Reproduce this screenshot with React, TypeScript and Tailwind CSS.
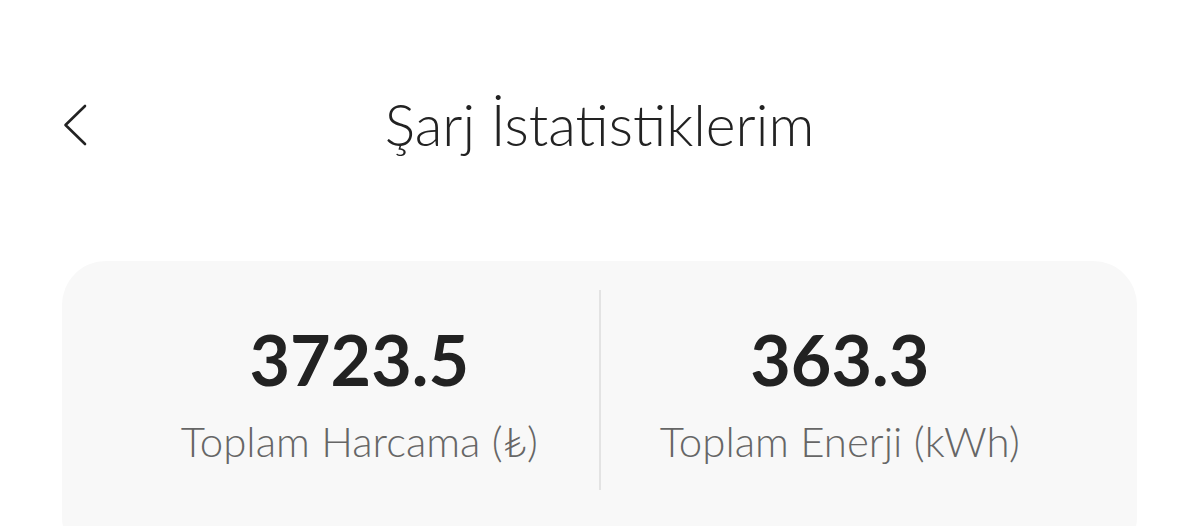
import React from "react";

type Stat = {
  value: string;
  label: string;
};

const stats: Stat[] = [
  { value: "3723.5", label: "Toplam Harcama (₺)" },
  { value: "363.3", label: "Toplam Enerji (kWh)" },
];

function BackChevron() {
  return (
    <svg width="26" height="44" viewBox="0 0 26 44" fill="none" aria-hidden="true">
      <path
        d="M22 3 L2.5 22 L22 41"
        stroke="#222222"
        strokeWidth="2.6"
        strokeLinecap="round"
        strokeLinejoin="round"
      />
    </svg>
  );
}

function StatColumn({ stat }: { stat: Stat }) {
  return (
    <div className="flex flex-1 flex-col items-center pt-[34px]">
      <div className="text-[70px] font-bold leading-none text-[#222222]">{stat.value}</div>
      <div className="mt-[26px] text-[42px] font-light leading-none text-[#666666]">
        {stat.label}
      </div>
    </div>
  );
}

export default function App() {
  return (
    <div className="h-[526px] overflow-hidden bg-white font-['Lato',sans-serif]">
      {/* Top bar */}
      <div className="grid grid-cols-[1fr_auto_1fr] items-center pt-[96px]">
        <div className="flex items-center pl-[63px]">
          <BackChevron />
        </div>
        <h1 className="text-[57px] font-light leading-none text-[#222222]">
          Şarj İstatistiklerim
        </h1>
        <div />
      </div>

      {/* Totals card */}
      <div className="mx-[62px] mt-[108px] h-[300px] rounded-[44px] bg-[#f8f8f8] px-[58px] pt-[29px]">
        <div className="flex h-[200px]">
          <StatColumn stat={stats[0]} />
          <div className="w-[2px] bg-[#e3e3e3]" />
          <StatColumn stat={stats[1]} />
        </div>
      </div>
    </div>
  );
}
